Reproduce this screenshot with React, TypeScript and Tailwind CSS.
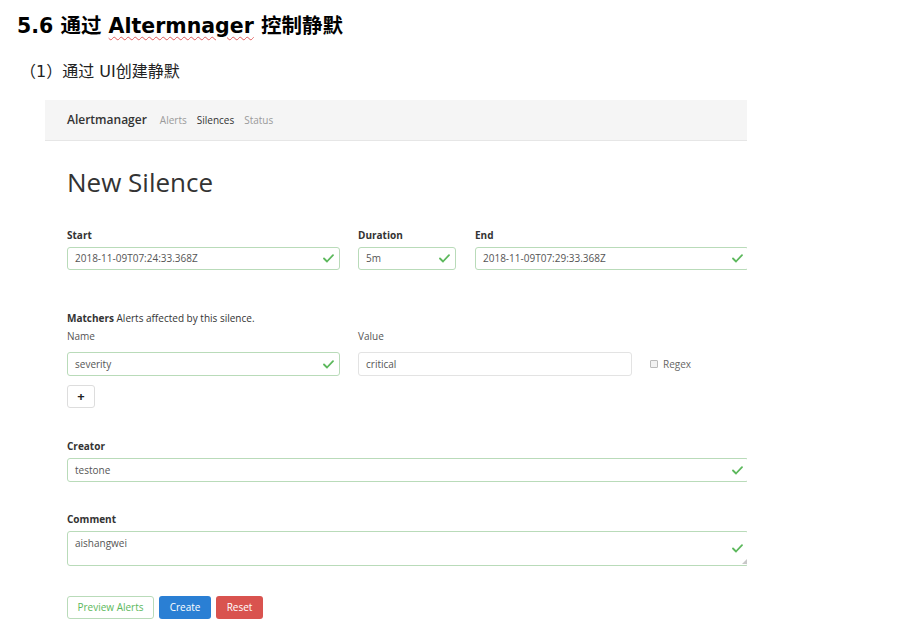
const ui = "font-['Open_Sans','Noto_Sans',sans-serif]";

function Check() {
  return (
    <svg width="11" height="9" viewBox="0 0 11 9" className="shrink-0">
      <polyline points="1,4.5 4,7.5 10,1.2" fill="none" stroke="#5cb85c" strokeWidth="1.8" strokeLinecap="round" strokeLinejoin="round" />
    </svg>
  );
}

function Field({ value, ok = true, className = "" }: { value: string; ok?: boolean; className?: string }) {
  return (
    <div
      className={`flex items-center justify-between h-[23px] pl-[7px] pr-[5px] rounded-[3px] border bg-white text-[10px] text-[#555] ${
        ok ? "border-[#b9dbb9]" : "border-[#e3e3e3]"
      } ${className}`}
    >
      <span>{value}</span>
      {ok && <Check />}
    </div>
  );
}

function Label({ children }: { children: React.ReactNode }) {
  return <div className="text-[10px] font-bold text-[#333] leading-[12px] mb-[6px]">{children}</div>;
}

export default function App() {
  return (
    <div className="w-[922px] h-[629px] bg-white overflow-hidden relative">
      <h1 className="pl-[17px] pt-[13px] text-[20.5px] font-bold text-black leading-[26px] font-['DejaVu_Sans','Noto_Sans_CJK_SC',sans-serif]">
        5.6 通过 <span className="underline decoration-wavy decoration-[#e05a5a] decoration-1 underline-offset-[3px]">Altermnager</span> 控制静默
      </h1>
      <p className="pl-[20px] mt-[23px] text-[16px] text-[#222] leading-[20px] font-['DejaVu_Sans','Noto_Sans_CJK_SC',sans-serif]">
        （1）通过 UI创建静默
      </p>

      <div className={`ml-[45px] mt-[18px] w-[702px] overflow-hidden ${ui}`}>
        <div className="h-[41px] bg-[#f5f5f5] border-b border-[#e6e6e6] flex items-center pl-[22px]">
          <span className="text-[12px] font-semibold text-[#333]">Alertmanager</span>
          <span className="ml-[13px] text-[10px] text-[#9a9a9a]">Alerts</span>
          <span className="ml-[10px] text-[10px] text-[#333]">Silences</span>
          <span className="ml-[10px] text-[10px] text-[#9a9a9a]">Status</span>
        </div>

        <div className="pl-[22px] w-[704px]">
          <div className="mt-[24px] text-[26px] text-[#333] leading-[34px]">New Silence</div>

          <div className="mt-[30px] flex">
            <div className="w-[273px]">
              <Label>Start</Label>
              <Field value="2018-11-09T07:24:33.368Z" />
            </div>
            <div className="ml-[18px] w-[98px]">
              <Label>Duration</Label>
              <Field value="5m" />
            </div>
            <div className="ml-[19px] flex-1">
              <Label>End</Label>
              <Field value="2018-11-09T07:29:33.368Z" />
            </div>
          </div>

          <div className="mt-[42px] text-[10px] text-[#333] leading-[12px]">
            <span className="font-bold">Matchers</span> Alerts affected by this silence.
          </div>
          <div className="mt-[6px] flex items-start">
            <div className="w-[273px]">
              <div className="text-[10px] text-[#555] leading-[12px] mb-[10px]">Name</div>
              <Field value="severity" className="h-[24px]" />
            </div>
            <div className="ml-[18px] w-[274px]">
              <div className="text-[10px] text-[#555] leading-[12px] mb-[10px]">Value</div>
              <Field value="critical" ok={false} className="h-[24px]" />
            </div>
            <label className="ml-[18px] mt-[22px] h-[24px] flex items-center text-[10px] text-[#666]">
              <span className="w-[8px] h-[8px] border border-[#bbb] rounded-[1px] bg-[#f2f2f2] mr-[5px]" />
              Regex
            </label>
          </div>
          <div className="mt-[9px] w-[28px] h-[23px] rounded-[3px] border border-[#ddd] flex items-center justify-center text-[13px] font-bold text-[#222]">
            +
          </div>

          <div className="mt-[32px]">
            <Label>Creator</Label>
            <Field value="testone" className="h-[24px]" />
          </div>

          <div className="mt-[31px]">
            <Label>Comment</Label>
            <div className="relative h-[35px] pl-[7px] pr-[5px] pt-[4px] rounded-[3px] border border-[#b9dbb9] text-[10px] text-[#555] flex justify-between">
              <span>aishangwei</span>
              <span className="mt-[8px]">
                <Check />
              </span>
              <span className="absolute right-[1px] bottom-[1px] w-0 h-0 border-l-[5px] border-l-transparent border-b-[5px] border-b-[#c8c8c8]" />
            </div>
          </div>

          <div className="mt-[30px] flex gap-[5px] text-[10px]">
            <button className="h-[23px] w-[87px] rounded-[3px] border border-[#b9dbb9] text-[#5cb85c] bg-white">Preview Alerts</button>
            <button className="h-[23px] w-[52px] rounded-[3px] bg-[#2a7fd4] text-white">Create</button>
            <button className="h-[23px] w-[47px] rounded-[3px] bg-[#d9534f] text-white">Reset</button>
          </div>
        </div>
      </div>
    </div>
  );
}
